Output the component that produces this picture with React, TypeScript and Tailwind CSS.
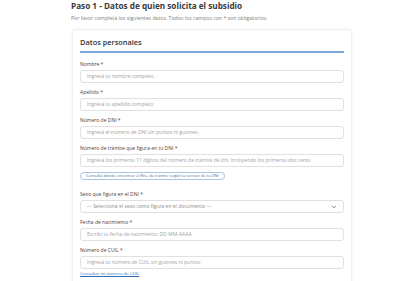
import { ChevronDown } from 'lucide-react';

const font = { fontFamily: '"Open Sans", "Noto Sans", sans-serif' };

function Field({ label, placeholder }: { label: string; placeholder: string }) {
  return (
    <div className="flex flex-col">
      <label className="text-[5px] leading-[7px] font-medium text-[#444] mb-[2px]">{label}</label>
      <div className="h-[13px] border border-[#e0e0e0] rounded-[3px] bg-white flex items-center px-[6px]">
        <span className="text-[5px] text-[#a3a3a3] whitespace-nowrap">{placeholder}</span>
      </div>
    </div>
  );
}

export default function App() {
  return (
    <div className="w-[420px] h-[281px] bg-white overflow-hidden" style={font}>
      <div className="pl-[71px] w-[352px]">
        <h1 className="text-[8.2px] leading-[10px] font-bold text-[#3a3a3a] pt-[1px]">
          Paso 1 - Datos de quien solicita el subsidio
        </h1>
        <p className="text-[5.2px] leading-[7px] text-[#808080] mt-[4px]">
          Por favor completá los siguientes datos. Todos los campos con * son obligatorios.
        </p>

        <div className="mt-[7px] ml-[1px] border border-[#efefef] rounded-[3px] shadow-[0_0_3px_rgba(0,0,0,0.05)] px-[7px] pt-[7px] pb-[10px]">
          <h2 className="text-[7.4px] leading-[10px] font-semibold text-[#333]">Datos personales</h2>
          <div className="h-[2px] bg-[#7aa7d9] mt-[4px] mb-[8px]" />

          <div className="flex flex-col gap-[6px]">
            <Field label="Nombre *" placeholder="Ingresá tu nombre completo" />
            <Field label="Apellido *" placeholder="Ingresá tu apellido completo" />
            <Field label="Número de DNI *" placeholder="Ingresá el número de DNI sin puntos ni guiones." />
            <div className="flex flex-col">
              <Field
                label="Número de trámite que figura en tu DNI *"
                placeholder="Ingresá los primeros 11 dígitos del número de trámite de dni, incluyendo los primeros dos ceros"
              />
              <div className="mt-[5px] self-start h-[8px] px-[5px] border border-[#a9c3e3] rounded-full flex items-center">
                <span className="text-[4px] text-[#3d6fae] whitespace-nowrap">
                  Consultá dónde encontrar el Nro. de trámite según la versión de tu DNI
                </span>
              </div>
            </div>
          </div>

          <div className="flex flex-col mt-[11px]">
            <label className="text-[5px] leading-[7px] font-medium text-[#444] mb-[2px]">
              Sexo que figura en el DNI *
            </label>
            <div className="h-[13px] border border-[#e0e0e0] rounded-[3px] bg-white flex items-center justify-between px-[6px]">
              <span className="text-[5px] text-[#8a8a8a] whitespace-nowrap">
                --- Seleccioná el sexo como figura en el documento ---
              </span>
              <ChevronDown className="w-[6px] h-[6px] text-[#555]" strokeWidth={3} />
            </div>
          </div>

          <div className="flex flex-col gap-[6px] mt-[6px]">
            <Field label="Fecha de nacimiento *" placeholder="Escribí tu fecha de nacimiento: DD-MM-AAAA" />
            <div className="flex flex-col">
              <Field label="Número de CUIL *" placeholder="Ingresá tu número de CUIL sin guiones ni puntos" />
              <a className="mt-[1px] text-[4.3px] leading-[7px] text-[#2f6cb3] underline">Consultar mi número de CUIL</a>
            </div>
          </div>
        </div>
      </div>
    </div>
  );
}
